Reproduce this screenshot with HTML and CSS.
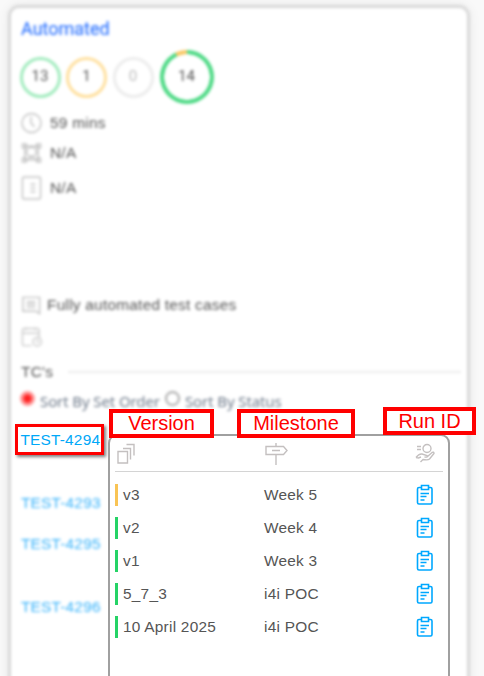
FILE: index.html
```html
<!DOCTYPE html>
<html lang="en">
<head>
<meta charset="utf-8">
<title>Automated</title>
<link rel="stylesheet" href="styles.css">
</head>
<body>
<svg width="0" height="0" class="defs">
  <symbol id="clip" viewBox="0 0 18 22">
    <path d="M5.500 3.500H3Q1.500 3.500 1.500 5V18.500Q1.500 20 3 20H14.500Q16 20 16 18.500V5Q16 3.500 14.500 3.500H12.500M5.500 1.500H12.500V5.500H5.500ZM4.500 9.500H13M4.500 12.500H10.500M4.500 16H8.500"/>
  </symbol>
</svg>
<main class="card">
  <h1 class="title">Automated</h1>
  <div class="rings">
    <span class="ring green">13</span>
    <span class="ring amber">1</span>
    <span class="ring grey">0</span>
    <span class="total">14</span>
  </div>
  <ul class="facts">
    <li class="time"><svg class="icon" viewBox="0 0 22 22"><circle cx="11" cy="11" r="10"/><path d="M10.500 4.500V11L14 15"/></svg>59 mins</li>
    <li class="env"><svg class="icon" viewBox="0 0 22 22"><path d="M4 4h14v14H4zM1.500 1.500h4v4h-4zM16.500 1.500h4v4h-4zM1.500 16.500h4v4h-4zM16.500 16.500h4v4h-4z"/><circle cx="11" cy="10" r="5"/><path d="M8 17l3-3 3 3"/></svg>N/A</li>
    <li class="build"><svg class="icon tall" viewBox="0 0 22 26"><rect x="1.500" y="1.500" width="19" height="23" rx="2"/><path d="M10 9h5M10 13h5M10 17h5"/></svg>N/A</li>
    <li class="about"><svg class="icon" viewBox="0 0 22 22"><path d="M2 3h17.500v17l-4-2.500H2zM6 7.500h9M6 10.500h9M6 13.500h9"/></svg>Fully automated test cases</li>
    <li class="date"><svg class="icon" viewBox="0 0 22 22"><path d="M11 20H3.500Q1.500 20 1.500 18V4Q1.500 2 3.500 2H17Q19 2 19 4V11M1.500 7H19M5 1v3M15 1v3"/><circle cx="17" cy="16" r="4.500"/><path d="M17 14v2h2"/></svg></li>
  </ul>
  <div class="divider"><span>TC's</span><i></i></div>
  <div class="sort">
    <i class="radio on"></i><span>Sort By Set Order</span>
    <i class="radio"></i><span>Sort By Status</span>
  </div>
  <div class="tests">
    <a>TEST-4293</a>
    <a>TEST-4295</a>
    <a>TEST-4296</a>
  </div>
</main>
<a class="selected">TEST-4294</a>
<section class="popup">
  <header class="row head">
    <svg class="copies" viewBox="0 0 18 22"><path d="M1 8.500h9.500v11.500H1zM6 5.500h7.500v11M9.500 1.500h7.500v11"/></svg>
    <svg class="sign" viewBox="0 0 24 24"><path d="M12 1v3M12 13v10M2 4.500h17.500l3.500 4-3.500 4H2zM8 8.500h8"/></svg>
    <svg class="hand" viewBox="0 0 20 20"><circle cx="12" cy="5.500" r="4"/><path d="M2 3.500h4M2 6.500h4M1 14.500Q4 10.500 7 11L12 12.500Q13.500 14.500 9.500 14M12 14L17 9.500Q19 8.500 19 10.500L14.500 16Q13 17.500 8 16.500L5.500 19M1 14.500L3.500 15L6 14"/></svg>
  </header>
  <div class="row"><span class="version warn">v3</span><span>Week 5</span><svg class="clip"><use href="#clip"/></svg></div>
  <div class="row"><span class="version">v2</span><span>Week 4</span><svg class="clip"><use href="#clip"/></svg></div>
  <div class="row"><span class="version">v1</span><span>Week 3</span><svg class="clip"><use href="#clip"/></svg></div>
  <div class="row"><span class="version">5_7_3</span><span>i4i POC</span><svg class="clip"><use href="#clip"/></svg></div>
  <div class="row"><span class="version">10 April 2025</span><span>i4i POC</span><svg class="clip"><use href="#clip"/></svg></div>
</section>
<div class="label label-version">Version</div>
<div class="label label-milestone">Milestone</div>
<div class="label label-run">Run ID</div>
</body>
</html>
```
FILE: styles.css
```css
* { box-sizing: border-box; }
html, body { height: 100%; }
body {
  margin: 0;
  position: relative;
  overflow: hidden;
  background: #f9f9f9;
  font: 15.400px "Liberation Sans", Arial, sans-serif;
  letter-spacing: 0.25px;
  color: #555;
}
svg { fill: none; flex: none; }
.defs { position: absolute; }

.card {
  width: 462px;
  height: 700px;
  margin: 5px 0 0 8px;
  padding: 8px 6px 0 9px;
  border: 3px solid #d8d8d8;
  border-radius: 11px;
  background: #fff;
  box-shadow: 0 0 12px rgba(0, 0, 0, 0.07);
  filter: blur(1.4px);
}
.title {
  margin: 0 0 0 1px;
  height: 24px;
  font: 400 18px/26px Roboto, sans-serif;
  letter-spacing: 0;
  color: #3478ff;
  -webkit-text-stroke: 0.2px #3478ff;
}
.rings {
  display: flex;
  align-items: center;
  height: 54px;
  margin-top: 10px;
  font: 15px Roboto, sans-serif;
  letter-spacing: 0;
}
.ring, .total {
  display: flex;
  align-items: center;
  justify-content: center;
  border-radius: 50%;
  padding-bottom: 3px;
}
.ring {
  width: 41px;
  height: 41px;
  margin: 0 5.500px 0 -0.5px;
  border: 3px solid;
  border-color: #a0ebbd;
}
.ring.amber { border-color: #ffdf9c; }
.ring.grey { border-color: #ececec; color: #bbb; }
.ring + .ring { margin-left: 0; }
.total {
  width: 54px;
  height: 54px;
  margin-left: 0.5px;
  background:
    radial-gradient(circle, #fff 22.5px, transparent 23px),
    conic-gradient(#4cd984 0 93%, #f8c660 93%);
}

.facts { list-style: none; margin: 8px 0 0; padding: 0 0 0 1px; }
.facts li { display: flex; align-items: center; gap: 8px; height: 22px; }
.icon { width: 21px; height: 22px; stroke: #c2c2c2; stroke-width: 1.5; }
.icon.tall { height: 26px; }
.facts .env { margin-top: 8px; }
.facts .build { margin-top: 13px; }
.facts .about { margin-top: 95px; gap: 5px; }
.facts .date { margin-top: 10px; }
.date .icon { stroke: #ccc; }
.divider {
  display: flex;
  align-items: center;
  gap: 15px;
  height: 22px;
  margin: 13px 0 0 1px;
}
.divider i { flex: 1; height: 2px; background: #ececec; }
.sort {
  display: flex;
  align-items: center;
  height: 24px;
  margin: 4px 0 0 1px;
  font: 15px "Noto Sans", sans-serif;
  letter-spacing: -0.1px;
  color: #6f7b8b;
}
.sort span { padding-top: 3px; }
.radio {
  width: 15px;
  height: 15px;
  margin: 0 5px 1px;
  border: 2px solid #aaa;
  border-radius: 50%;
}
.radio.on {
  margin-left: -1px;
  background: radial-gradient(circle, #f22 3px, #ff8b8b 5px);
  border-color: #ff9b9b;
}
.tests { display: flex; flex-direction: column; margin: 82px 0 0 1px; line-height: 20px; color: #36b2fa; letter-spacing: 0.2px; }
.tests a { margin-bottom: 21px; }
.tests a:last-child { margin-top: 22px; }

.selected {
  position: absolute;
  left: 15px;
  top: 424px;
  width: 89px;
  height: 31px;
  border: 3px solid #f00;
  padding-left: 2.500px;
  line-height: 26px;
  letter-spacing: 0.2px;
  white-space: nowrap;
  color: #00a8f8;
  background: #fff;
  box-shadow: 2px 2px 3px rgba(0, 0, 0, 0.5);
}
.popup {
  position: absolute;
  left: 108px;
  top: 434px;
  width: 342px;
  height: 260px;
  padding: 0 5px;
  border: 2px solid #a0a0a0;
  border-radius: 9px;
  background: #fff;
}
.row {
  display: grid;
  grid-template-columns: 149px 152px 1fr;
  align-items: center;
  height: 33px;
}
.row > span { line-height: 22px; }
.head {
  height: 36px;
  margin-bottom: 6px;
  border-bottom: 1px solid #d4d4d4;
  stroke: #c4c0c0;
  stroke-width: 1.4;
}
.copies { width: 18px; height: 22px; margin-left: 2px; }
.sign { width: 24px; height: 24px; }
.hand { width: 20px; height: 20px; margin: -2px 0 0 -1px; }
.row > .version { border-left: 3px solid #25d366; padding-left: 5px; }
.row > .version.warn { border-color: #f9c455; }
.clip { width: 18px; height: 22px; stroke: #00a8ff; stroke-width: 1.6; }
.label {
  position: absolute;
  display: flex;
  align-items: center;
  justify-content: center;
  height: 29px;
  border: 4px solid #f00;
  background: #fff;
  color: #f00;
  font-size: 20px;
  letter-spacing: 0;
  white-space: nowrap;
}
.label-version { left: 109px; top: 409px; width: 105px; }
.label-milestone { left: 237px; top: 409px; width: 118px; }
.label-run { left: 383px; top: 407px; width: 93px; height: 28px; }
```
